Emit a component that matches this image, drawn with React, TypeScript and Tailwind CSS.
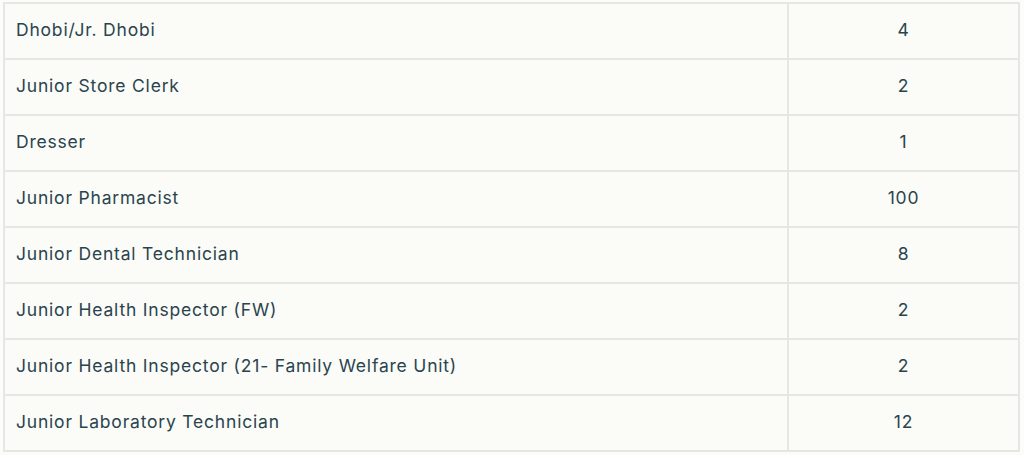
const rows: [string, string][] = [
  ["Dhobi/Jr. Dhobi", "4"],
  ["Junior Store Clerk", "2"],
  ["Dresser", "1"],
  ["Junior Pharmacist", "100"],
  ["Junior Dental Technician", "8"],
  ["Junior Health Inspector (FW)", "2"],
  ["Junior Health Inspector (21- Family Welfare Unit)", "2"],
  ["Junior Laboratory Technician", "12"],
];

export default function App() {
  return (
    <div className="min-h-screen bg-[#fcfcfa] pl-[3px] pt-[2px]">
      <table
        className="w-[1017px] border-collapse bg-[#fbfbf8] text-[17.5px] tracking-[0.8px] text-[#2a444d]"
        style={{ fontFamily: "Inter, 'Liberation Sans', sans-serif" }}
      >
        <tbody>
          {rows.map(([post, count]) => (
            <tr key={post} className="h-[56px]">
              <td className="w-[784px] border-2 border-[#e6e6e2] pb-[2px] pl-[11px]">
                {post}
              </td>
              <td className="border-2 border-[#e6e6e2] pb-[2px] text-center">
                {count}
              </td>
            </tr>
          ))}
        </tbody>
      </table>
    </div>
  );
}
